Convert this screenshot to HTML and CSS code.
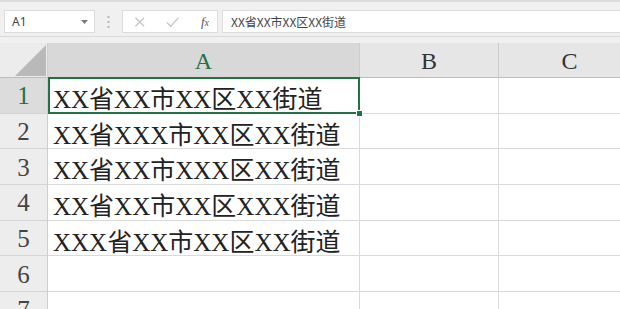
FILE: index.html
```html
<!DOCTYPE html>
<html lang="zh-CN">
<head>
    <meta charset="UTF-8">
    <meta name="viewport" content="width=device-width, initial-scale=1.0">
    <title>Sheet1</title>
    <link rel="stylesheet" href="styles.css">
</head>
<body>

<div class="toolbar">
    <div class="name-box">
        <span>A1</span>
        <svg class="arrow" width="7" height="4" viewBox="0 0 7 4"><path d="M0 0h7L3.5 4z" fill="#7a7a7a"/></svg>
    </div>
    <svg class="dots" width="3" height="12" viewBox="0 0 3 12">
        <rect x="0.5" y="0" width="2" height="2" fill="#b8b8b8"/>
        <rect x="0.5" y="5" width="2" height="2" fill="#b8b8b8"/>
        <rect x="0.5" y="10" width="2" height="2" fill="#b8b8b8"/>
    </svg>
    <div class="formula-tools">
        <svg width="12" height="12" viewBox="0 0 12 12"><path d="M1.5 1.5l9 9M10.5 1.5l-9 9" stroke="#c4c4c4" stroke-width="1.3" fill="none"/></svg>
        <svg width="14" height="12" viewBox="0 0 14 12"><path d="M1 6.5l4 4L13 1.5" stroke="#c4c4c4" stroke-width="1.3" fill="none"/></svg>
        <span class="fx"><i>f</i><i class="x">x</i></span>
    </div>
    <div class="formula-bar">XX省XX市XX区XX街道</div>
</div>

<div class="sheet">
    <div class="corner">
        <svg width="31" height="31" viewBox="0 0 31 31"><path d="M31 0V31H0z" fill="#b9b9b9"/></svg>
    </div>
    <div class="col-head active">A</div>
    <div class="col-head">B</div>
    <div class="col-head">C</div>

    <div class="row-head active">1</div>
    <div class="cell selected">XX省XX市XX区XX街道<span class="sel-box"><span class="handle"></span></span></div>
    <div class="cell"></div>
    <div class="cell"></div>

    <div class="row-head">2</div>
    <div class="cell">XX省XXX市XX区XX街道</div>
    <div class="cell"></div>
    <div class="cell"></div>

    <div class="row-head">3</div>
    <div class="cell">XX省XX市XXX区XX街道</div>
    <div class="cell"></div>
    <div class="cell"></div>

    <div class="row-head">4</div>
    <div class="cell">XX省XX市XX区XXX街道</div>
    <div class="cell"></div>
    <div class="cell"></div>

    <div class="row-head">5</div>
    <div class="cell">XXX省XX市XX区XX街道</div>
    <div class="cell"></div>
    <div class="cell"></div>

    <div class="row-head">6</div>
    <div class="cell"></div>
    <div class="cell"></div>
    <div class="cell"></div>

    <div class="row-head">7</div>
    <div class="cell"></div>
    <div class="cell"></div>
    <div class="cell"></div>
</div>

</body>
</html>
```

FILE: styles.css
```css
body {
    margin: 0;
    background-color: #f0f0f0;
    font-family: "Noto Sans", "Noto Sans CJK SC", sans-serif;
    overflow: hidden;
    width: 620px;
    height: 309px;
}
.toolbar {
    display: flex;
    align-items: center;
    height: 23px;
    padding: 8px 0 3px 4px;
    border-top: 2px solid #dcdcdc;
    border-bottom: 1px solid #dadada;
    margin-bottom: 6px;
}
.name-box {
    display: flex;
    align-items: center;
    justify-content: space-between;
    box-sizing: border-box;
    width: 91px;
    height: 23px;
    padding: 0 6px 0 7px;
    background-color: white;
    border: 1px solid #dcdcdc;
    font-size: 12px;
    color: #444;
}
.dots {
    margin: 0 12px 0 12px;
}
.formula-tools {
    display: flex;
    align-items: center;
    box-sizing: border-box;
    width: 96px;
    height: 23px;
    padding: 0 8px 0 11px;
    gap: 20px;
    background-color: white;
    border: 1px solid #dcdcdc;
}
.fx {
    font-family: "Liberation Serif", serif;
    font-size: 13px;
    color: #555;
    margin-left: 2px;
}
.fx .x {
    font-size: 10px;
}
.formula-bar {
    flex: 1;
    box-sizing: border-box;
    height: 23px;
    margin-left: 4px;
    padding: 0 8px;
    background-color: white;
    border: 1px solid #dcdcdc;
    border-right: none;
    font-family: "Noto Sans CJK SC", sans-serif;
    font-size: 12px;
    line-height: 21px;
    color: #444;
}
.sheet {
    display: grid;
    grid-template-columns: 48px 312px 139px 142px;
    grid-template-rows: 35px;
    grid-auto-rows: 35.7px;
    width: 641px;
}
.corner {
    display: flex;
    align-items: flex-end;
    justify-content: flex-end;
    box-sizing: border-box;
    padding: 0 1px 1px 0;
    background-color: #ececec;
    border-right: 1px solid #cfcfcf;
    border-bottom: 1px solid #bdbdbd;
}
.col-head {
    display: flex;
    align-items: center;
    justify-content: center;
    box-sizing: border-box;
    background-color: #e6e6e6;
    border-right: 1px solid #cdcdcd;
    border-bottom: 1px solid #bdbdbd;
    font-family: "Liberation Serif", serif;
    font-size: 24px;
    color: #333;
    padding-top: 2px;
}
.col-head.active {
    background-color: #d8d8d8;
    color: #217346;
}
.row-head {
    display: flex;
    align-items: center;
    justify-content: center;
    box-sizing: border-box;
    background-color: #ededed;
    border-right: 1px solid #cdcdcd;
    border-bottom: 1px solid #d4d4d4;
    font-family: "Liberation Serif", serif;
    font-size: 25px;
    color: #444;
    padding-top: 2px;
}
.row-head.active {
    background-color: #dcdcdc;
    color: #217346;
}
.cell {
    display: flex;
    align-items: center;
    box-sizing: border-box;
    padding: 3px 0 0 5px;
    background-color: white;
    border-right: 1px solid #dadada;
    border-bottom: 1px solid #dadada;
    font-family: "Liberation Serif", "Noto Sans CJK SC", serif;
    font-size: 25px;
    color: #222;
    white-space: nowrap;
}
.cell.selected {
    position: relative;
}
.sel-box {
    position: absolute;
    top: -1px;
    left: 0;
    right: -1px;
    bottom: -1px;
    border: 2px solid #217346;
}
.handle {
    position: absolute;
    right: -5px;
    bottom: -5px;
    width: 5px;
    height: 5px;
    background-color: #217346;
    border: 1px solid white;
}
```
